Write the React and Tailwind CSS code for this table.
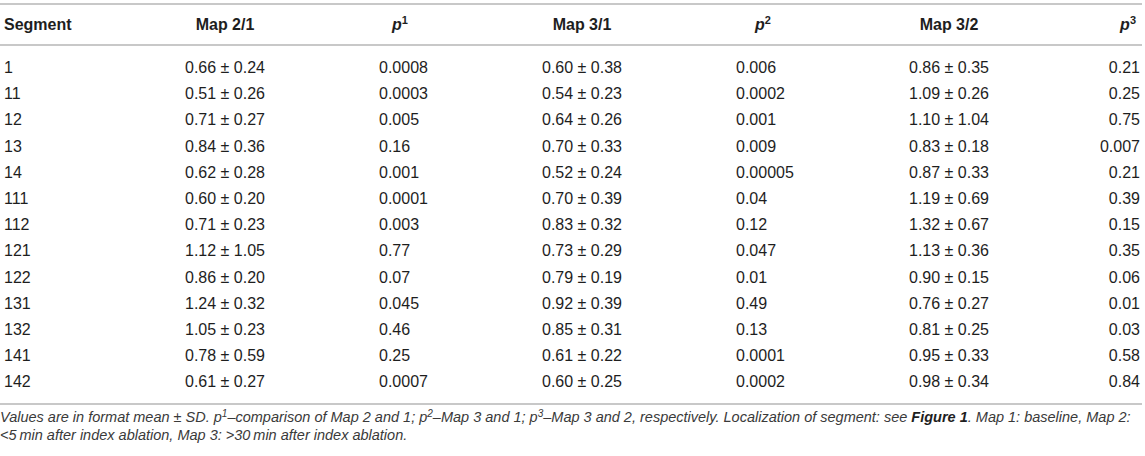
import React from 'react';

const rows = [
  ['1', '0.66 ± 0.24', '0.0008', '0.60 ± 0.38', '0.006', '0.86 ± 0.35', '0.21'],
  ['11', '0.51 ± 0.26', '0.0003', '0.54 ± 0.23', '0.0002', '1.09 ± 0.26', '0.25'],
  ['12', '0.71 ± 0.27', '0.005', '0.64 ± 0.26', '0.001', '1.10 ± 1.04', '0.75'],
  ['13', '0.84 ± 0.36', '0.16', '0.70 ± 0.33', '0.009', '0.83 ± 0.18', '0.007'],
  ['14', '0.62 ± 0.28', '0.001', '0.52 ± 0.24', '0.00005', '0.87 ± 0.33', '0.21'],
  ['111', '0.60 ± 0.20', '0.0001', '0.70 ± 0.39', '0.04', '1.19 ± 0.69', '0.39'],
  ['112', '0.71 ± 0.23', '0.003', '0.83 ± 0.32', '0.12', '1.32 ± 0.67', '0.15'],
  ['121', '1.12 ± 1.05', '0.77', '0.73 ± 0.29', '0.047', '1.13 ± 0.36', '0.35'],
  ['122', '0.86 ± 0.20', '0.07', '0.79 ± 0.19', '0.01', '0.90 ± 0.15', '0.06'],
  ['131', '1.24 ± 0.32', '0.045', '0.92 ± 0.39', '0.49', '0.76 ± 0.27', '0.01'],
  ['132', '1.05 ± 0.23', '0.46', '0.85 ± 0.31', '0.13', '0.81 ± 0.25', '0.03'],
  ['141', '0.78 ± 0.59', '0.25', '0.61 ± 0.22', '0.0001', '0.95 ± 0.33', '0.58'],
  ['142', '0.61 ± 0.27', '0.0007', '0.60 ± 0.25', '0.0002', '0.98 ± 0.34', '0.84'],
];

const P = ({ n, size = 'text-[11px]' }) => (
  <span>
    <i>p</i>
    <sup className={size}>{n}</sup>
  </span>
);

export default function App() {
  return (
    <div className="w-[1145px] h-[456px] bg-white pt-[3px] text-[#1e1e1e] font-['Liberation_Sans',Arial,sans-serif]">
      <table className="w-[1142px] table-fixed border-collapse text-[16px]">
        <colgroup>
          <col className="w-[150px]" />
          <col className="w-[150px]" />
          <col className="w-[200px]" />
          <col className="w-[164px]" />
          <col className="w-[200px]" />
          <col className="w-[170px]" />
          <col className="w-[108px]" />
        </colgroup>
        <thead>
          <tr className="h-[41px] border-t-2 border-b-2 border-[#c8c8c8] font-bold">
            <th className="pl-[4px] text-left">Segment</th>
            <th className="text-center">Map 2/1</th>
            <th className="pl-[92px] text-left"><P n="1" /></th>
            <th className="text-center">Map 3/1</th>
            <th className="pl-[91px] text-left"><P n="2" /></th>
            <th className="text-center">Map 3/2</th>
            <th className="pr-[6px] text-right"><P n="3" /></th>
          </tr>
        </thead>
        <tbody className="border-b-2 border-[#c8c8c8]">
          <tr className="h-[10px]"><td colSpan={7} /></tr>
          {rows.map((r) => (
            <tr key={r[0]} className="h-[26.2px]">
              <td className="pl-[4px]">{r[0]}</td>
              <td className="text-center">{r[1]}</td>
              <td className="pl-[79px]">{r[2]}</td>
              <td className="text-center">{r[3]}</td>
              <td className="pl-[72px]">{r[4]}</td>
              <td className="text-center">{r[5]}</td>
              <td className="pr-[2px] text-right">{r[6]}</td>
            </tr>
          ))}
          <tr className="h-[9px]"><td colSpan={7} /></tr>
        </tbody>
      </table>
      <p className="mt-[3px] w-[1145px] whitespace-nowrap text-[14.5px] italic leading-[18px] text-[#3a3a3a]">
        Values are in format mean ± SD. <P n="1" size="text-[10px]" />–comparison of Map 2 and 1; <P n="2" size="text-[10px]" />–Map 3 and 1; <P n="3" size="text-[10px]" />–Map 3 and 2, respectively. Localization of segment: see <b className="text-[#1e1e1e]">Figure 1</b>. Map 1: baseline, Map 2:
        <br />
        &lt;5{'\u2009'}min after index ablation, Map 3: &gt;30{'\u2009'}min after index ablation.
      </p>
    </div>
  );
}
